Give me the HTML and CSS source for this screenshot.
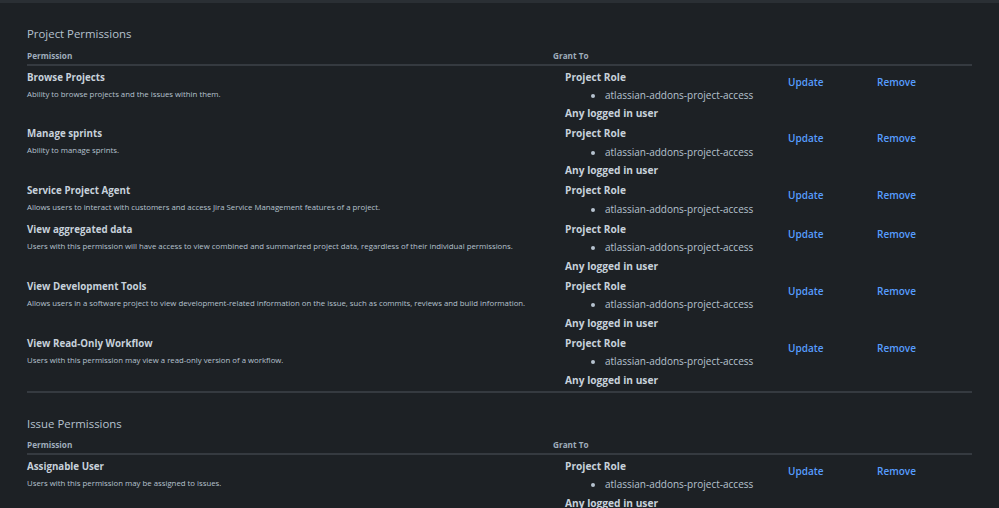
FILE: index.html
```html
<!DOCTYPE html>
<html lang="en">
<head>
<meta charset="utf-8">
<title>Permission scheme</title>
<link rel="stylesheet" href="styles.css">
</head>
<body>
<div class="topline"></div>
<main class="page">
  <section class="perm-section">
    <h3 class="section-title">Project Permissions</h3>
    <div class="perm-table">
      <div class="thead"><div>Permission</div><div>Grant To</div></div>

      <div class="row">
        <div class="perm"><div class="perm-name">Browse Projects</div><div class="perm-desc">Ability to browse projects and the issues within them.</div></div>
        <div class="grant"><div class="role">Project Role</div><ul><li>atlassian-addons-project-access</li></ul><div class="role">Any logged in user</div></div>
        <div class="op"><a href="#">Update</a></div>
        <div class="op"><a href="#">Remove</a></div>
      </div>

      <div class="row">
        <div class="perm"><div class="perm-name">Manage sprints</div><div class="perm-desc">Ability to manage sprints.</div></div>
        <div class="grant"><div class="role">Project Role</div><ul><li>atlassian-addons-project-access</li></ul><div class="role">Any logged in user</div></div>
        <div class="op"><a href="#">Update</a></div>
        <div class="op"><a href="#">Remove</a></div>
      </div>

      <div class="row">
        <div class="perm"><div class="perm-name">Service Project Agent</div><div class="perm-desc">Allows users to interact with customers and access Jira Service Management features of a project.</div></div>
        <div class="grant"><div class="role">Project Role</div><ul><li>atlassian-addons-project-access</li></ul></div>
        <div class="op"><a href="#">Update</a></div>
        <div class="op"><a href="#">Remove</a></div>
      </div>

      <div class="row">
        <div class="perm"><div class="perm-name">View aggregated data</div><div class="perm-desc">Users with this permission will have access to view combined and summarized project data, regardless of their individual permissions.</div></div>
        <div class="grant"><div class="role">Project Role</div><ul><li>atlassian-addons-project-access</li></ul><div class="role">Any logged in user</div></div>
        <div class="op"><a href="#">Update</a></div>
        <div class="op"><a href="#">Remove</a></div>
      </div>

      <div class="row">
        <div class="perm"><div class="perm-name">View Development Tools</div><div class="perm-desc">Allows users in a software project to view development-related information on the issue, such as commits, reviews and build information.</div></div>
        <div class="grant"><div class="role">Project Role</div><ul><li>atlassian-addons-project-access</li></ul><div class="role">Any logged in user</div></div>
        <div class="op"><a href="#">Update</a></div>
        <div class="op"><a href="#">Remove</a></div>
      </div>

      <div class="row">
        <div class="perm"><div class="perm-name">View Read-Only Workflow</div><div class="perm-desc">Users with this permission may view a read-only version of a workflow.</div></div>
        <div class="grant"><div class="role">Project Role</div><ul><li>atlassian-addons-project-access</li></ul><div class="role">Any logged in user</div></div>
        <div class="op"><a href="#">Update</a></div>
        <div class="op"><a href="#">Remove</a></div>
      </div>
    </div>
  </section>

  <section class="perm-section">
    <h3 class="section-title">Issue Permissions</h3>
    <div class="perm-table">
      <div class="thead"><div>Permission</div><div>Grant To</div></div>
      <div class="row">
        <div class="perm"><div class="perm-name">Assignable User</div><div class="perm-desc">Users with this permission may be assigned to issues.</div></div>
        <div class="grant"><div class="role">Project Role</div><ul><li>atlassian-addons-project-access</li></ul><div class="role">Any logged in user</div></div>
        <div class="op"><a href="#">Update</a></div>
        <div class="op"><a href="#">Remove</a></div>
      </div>
    </div>
  </section>
</main>
</body>
</html>
```
FILE: styles.css
```css
html, body {
  margin: 0;
  padding: 0;
  background: #1d2125;
  color: #b6c2cf;
  font-family: "Open Sans", "Noto Sans", sans-serif;
}

.topline {
  height: 3px;
  background: #2a2f34;
}

.page {
  padding: 0 27px;
}

.perm-section {
  padding-top: 21px;
}

.section-title {
  margin: 0 0 4px;
  font-size: 11.4px;
  line-height: 20px;
  font-weight: 400;
  color: #b6c2cf;
}

.perm-table {
  padding-bottom: 1.5px;
  border-bottom: 2px solid #353a40;
}

.thead {
  display: grid;
  grid-template-columns: 526px 1fr;
  font-size: 8.2px;
  font-weight: 700;
  line-height: 14px;
  color: #9fadbc;
  padding-top: 0.5px;
  padding-bottom: 1px;
  border-bottom: 2px solid #353a40;
}

.row {
  display: grid;
  grid-template-columns: 526px 235px 89px 1fr;
  padding: 2px 0 0;
}

.perm {
  padding-top: 1px;
}

.perm-name {
  font-size: 9.75px;
  font-weight: 700;
  line-height: 18px;
  color: #c7d1db;
}

.perm-desc {
  font-size: 7.8px;
  line-height: 14px;
  color: #b6c2cf;
}

.grant {
  padding-left: 12px;
  font-size: 10px;
  line-height: 18.33px;
}

.role {
  font-size: 10.2px;
  font-weight: 700;
  color: #c7d1db;
}

.grant ul {
  margin: 0;
  padding-left: 40px;
  color: #b6c2cf;
}

.op {
  padding-top: 5px;
  font-size: 10px;
  line-height: 18.33px;
}

.op a {
  color: #579dff;
  font-weight: 600;
  text-decoration: none;
}
```
